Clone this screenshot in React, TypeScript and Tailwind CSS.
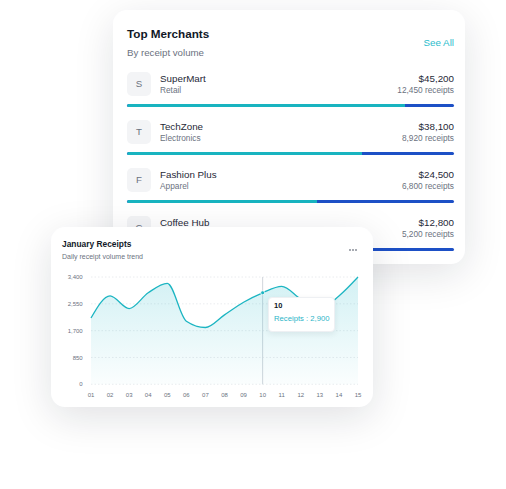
import React from 'react';

const merchants = [
  { letter: 'S', name: 'SuperMart', category: 'Retail', amount: '$45,200', receipts: '12,450 receipts', pct: 85 },
  { letter: 'T', name: 'TechZone', category: 'Electronics', amount: '$38,100', receipts: '8,920 receipts', pct: 72 },
  { letter: 'F', name: 'Fashion Plus', category: 'Apparel', amount: '$24,500', receipts: '6,800 receipts', pct: 58 },
  { letter: 'C', name: 'Coffee Hub', category: 'Cafe', amount: '$12,800', receipts: '5,200 receipts', pct: 45 },
];

const receipts = [2100, 2800, 2400, 2900, 3200, 2000, 1800, 2200, 2600, 2900, 3100, 2700, 2400, 2800, 3400];
const ticks = [0, 850, 1700, 2550, 3400];

// plot area inside the chart svg
const left = 40;
const right = 307;
const top = 12;
const bottom = 119.3;
const X = (i: number) => left + (i * (right - left)) / (receipts.length - 1);
const Y = (v: number) => bottom - (v / 3400) * (bottom - top);

const sign = (x: number) => (x < 0 ? -1 : 1);

// same shape as d3 curveMonotoneX
function monotonePath(pts: [number, number][]) {
  const n = pts.length;
  const s: number[] = [];
  for (let i = 0; i < n - 1; i++) s.push((pts[i + 1][1] - pts[i][1]) / (pts[i + 1][0] - pts[i][0]));
  const m: number[] = new Array(n).fill(0);
  for (let i = 1; i < n - 1; i++) {
    const h0 = pts[i][0] - pts[i - 1][0];
    const h1 = pts[i + 1][0] - pts[i][0];
    const p = (s[i - 1] * h1 + s[i] * h0) / (h0 + h1);
    m[i] = (sign(s[i - 1]) + sign(s[i])) * Math.min(Math.abs(s[i - 1]), Math.abs(s[i]), 0.5 * Math.abs(p)) || 0;
  }
  m[0] = (3 * s[0] - m[1]) / 2;
  m[n - 1] = (3 * s[n - 2] - m[n - 2]) / 2;
  let d = `M${pts[0][0]},${pts[0][1]}`;
  for (let i = 0; i < n - 1; i++) {
    const dx = (pts[i + 1][0] - pts[i][0]) / 3;
    d += ` C${pts[i][0] + dx},${pts[i][1] + dx * m[i]} ${pts[i + 1][0] - dx},${pts[i + 1][1] - dx * m[i + 1]} ${pts[i + 1][0]},${pts[i + 1][1]}`;
  }
  return d;
}

function ReceiptsChart() {
  const pts = receipts.map((v, i) => [X(i), Y(v)] as [number, number]);
  const line = monotonePath(pts);
  const area = `${line} L${X(receipts.length - 1)},${bottom} L${X(0)},${bottom} Z`;
  const active = 9;

  return (
    <svg className="mt-[4px] block" width={322} height={142} viewBox="0 0 322 142">
      <defs>
        <linearGradient id="receiptsFill" x1="0" y1="0" x2="0" y2="1">
          <stop offset="0%" stopColor="#22b8c8" stopOpacity={0.2} />
          <stop offset="100%" stopColor="#22b8c8" stopOpacity={0.02} />
        </linearGradient>
      </defs>
      {ticks.map((t) => (
        <g key={t}>
          <line x1={left} x2={right} y1={Y(t)} y2={Y(t)} stroke="#e5e7eb" strokeWidth={0.8} strokeDasharray="1.5 2" />
          <text x={31.7} y={Y(t)} dy="2.1" textAnchor="end" fontSize={6} fill="#6b7280">
            {t.toLocaleString('en-US')}
          </text>
        </g>
      ))}
      {receipts.map((_, i) => (
        <text key={i} x={X(i)} y={131.7} textAnchor="middle" fontSize={6} fill="#6b7280">
          {String(i + 1).padStart(2, '0')}
        </text>
      ))}
      <line x1={X(active)} x2={X(active)} y1={top} y2={bottom} stroke="#d1d5db" strokeWidth={1} />
      <path d={area} fill="url(#receiptsFill)" />
      <path d={line} fill="none" stroke="#1cb5c2" strokeWidth={1.3} />
      <circle cx={X(active)} cy={Y(receipts[active])} r={2} fill="#1cb5c2" stroke="#fff" strokeWidth={0.8} />
    </svg>
  );
}

export default function App() {
  return (
    <div className="relative w-[506px] h-[489px] overflow-hidden bg-white font-['Liberation_Sans',Arial,sans-serif]">
      <div className="pt-[10px] pl-[113px]">
        <div className="w-[352px] h-[254px] rounded-[14px] bg-white pl-[14px] pr-[11px] pt-[16px] shadow-[0_10px_40px_rgba(15,23,42,0.12)]">
          <div className="flex items-center justify-between">
            <div>
              <h2 className="text-[11.7px] leading-[16px] font-bold text-[#111827]">Top Merchants</h2>
              <p className="mt-[5px] text-[9.7px] leading-[12px] text-[#6b7280]">By receipt volume</p>
            </div>
            <span className="text-[9.8px] leading-[12px] text-[#2bbccc]">See All</span>
          </div>

          <div className="mt-[13px] flex flex-col gap-[13px]">
            {merchants.map((m) => (
              <div key={m.name}>
                <div className="flex items-center gap-[9px]">
                  <div className="flex h-6 w-6 items-center justify-center rounded-[5px] bg-[#f3f4f6] text-[9.7px] text-[#6b7280]">
                    {m.letter}
                  </div>
                  <div className="flex-1 pt-px">
                    <p className="text-[9.8px] leading-[12px] text-[#1f2937]">{m.name}</p>
                    <p className="text-[8.3px] leading-[11px] text-[#6b7280]">{m.category}</p>
                  </div>
                  <div className="pt-px text-right">
                    <p className="text-[9.8px] leading-[12px] text-[#1f2937]">{m.amount}</p>
                    <p className="text-[8.3px] leading-[11px] text-[#6b7280]">{m.receipts}</p>
                  </div>
                </div>
                <div className="mt-[8px] flex h-[3px] overflow-hidden rounded-full bg-[#1d50c6]">
                  <div className="h-full rounded-l-full bg-[#18b4c0]" style={{ width: `${m.pct}%` }} />
                </div>
              </div>
            ))}
          </div>
        </div>
      </div>

      <div className="absolute left-[51px] top-[227px] w-[322px] h-[180px] rounded-[14px] bg-white shadow-[0_10px_40px_rgba(15,23,42,0.13)]">
        <div className="flex items-center justify-between pl-[11px] pr-[16px] pt-[12px]">
          <div>
            <h3 className="text-[8.4px] leading-[11px] font-bold text-[#111827]">January Receipts</h3>
            <p className="mt-[2px] text-[7px] leading-[9px] text-[#6b7280]">Daily receipt volume trend</p>
          </div>
          <svg width={8} height={2} viewBox="0 0 8 2">
            <circle cx={1} cy={1} r={0.8} fill="#374151" />
            <circle cx={4} cy={1} r={0.8} fill="#374151" />
            <circle cx={7} cy={1} r={0.8} fill="#374151" />
          </svg>
        </div>

        <ReceiptsChart />

        <div className="absolute left-[217px] top-[70px] w-[67px] h-[35px] rounded-[4px] border border-[#eef0f3] bg-white pl-[5px] pt-[3px] shadow-[0_2px_6px_rgba(15,23,42,0.08)]">
          <p className="text-[7.5px] leading-[10px] font-bold text-[#111827]">10</p>
          <p className="mt-[3px] text-[7.7px] leading-[10px] text-[#2bb5c8]">Receipts : 2,900</p>
        </div>
      </div>
    </div>
  );
}
